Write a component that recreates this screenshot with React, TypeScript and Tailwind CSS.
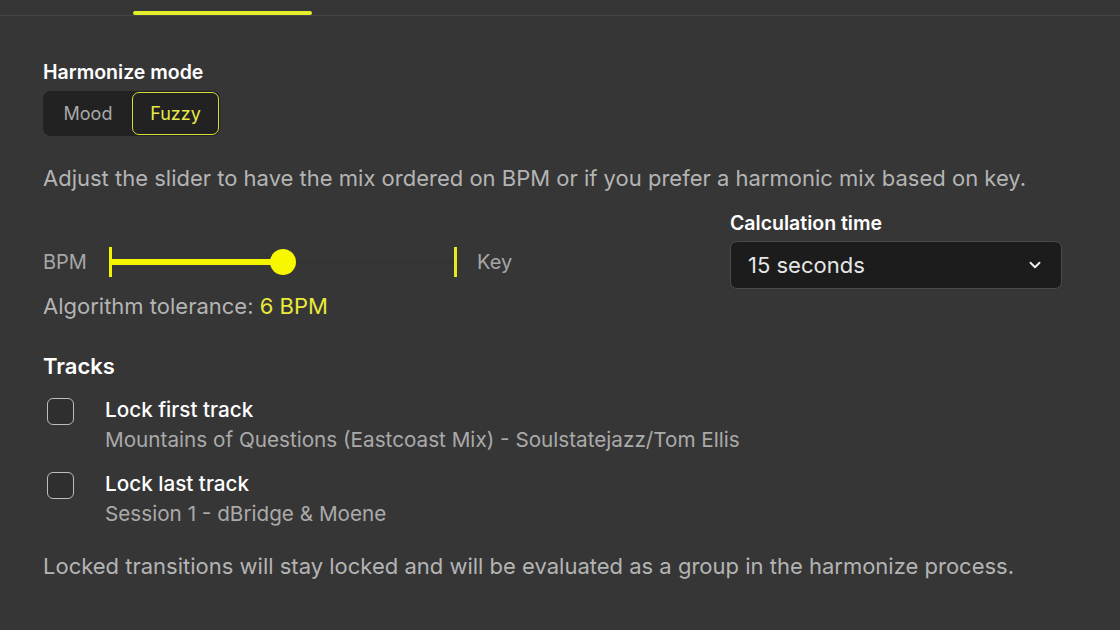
import React from "react";

export default function App() {
  return (
    <div
      className="w-[1120px] h-[630px] bg-[#363636] overflow-hidden text-[#b9b9b9]"
      style={{ fontFamily: "Inter, 'Noto Sans', sans-serif" }}
    >
      {/* tab bar remnant */}
      <div className="h-[16px] border-b border-[#474747] relative">
        <div className="absolute left-[133px] top-[11px] w-[179px] h-[4px] rounded-full bg-[#e4ef2c]" />
      </div>

      <div className="px-[43px] pt-[44px]">
        <div className="text-[19.5px] font-semibold text-white leading-[24px]">Harmonize mode</div>
        <div className="mt-[7px] inline-flex h-[45px] rounded-[8px] bg-[#222222] p-[1px]">
          <div className="w-[88px] flex items-center justify-center text-[18px] text-[#a9a9a9]">Mood</div>
          <div className="w-[87px] flex items-center justify-center text-[18px] text-[#e8e84a] border-[1.5px] border-[#d9dc3a] rounded-[7px]">
            Fuzzy
          </div>
        </div>

        <div className="mt-[27px] text-[22px] leading-[30px] text-[#b4b4b4]">
          Adjust the slider to have the mix ordered on BPM or if you prefer a harmonic mix based on key.
        </div>

        <div className="mt-[18px] flex">
          <div className="w-[687px]">
            <div className="flex items-center mt-[34px] h-[34px]">
              <span className="text-[20px] text-[#a6a6a6] w-[66px]">BPM</span>
              <div className="relative w-[348px] h-[34px]">
                <div className="absolute left-0 top-[2px] w-[3px] h-[30px] bg-[#f2f200]" />
                <div className="absolute left-[2px] top-[15px] w-[344px] h-[4px] bg-[#333333]" />
                <div className="absolute left-[2px] top-[14px] w-[172px] h-[6px] bg-[#f4f400]" />
                <div className="absolute left-[161px] top-[4px] w-[26px] h-[26px] rounded-full bg-[#f7f700]" />
                <div className="absolute left-[345px] top-[2px] w-[3px] h-[30px] bg-[#e2ec20]" />
              </div>
              <span className="ml-[20px] text-[20px] text-[#a6a6a6]">Key</span>
            </div>
            <div className="mt-[13px] text-[22px] text-[#b4b4b4] leading-[28px]">
              Algorithm tolerance: <span className="text-[#eaea3a]">6 BPM</span>
            </div>
          </div>
          <div className="w-[332px]">
            <div className="text-[19.5px] font-semibold text-white leading-[24px]">Calculation time</div>
            <div className="mt-[6px] h-[48px] rounded-[7px] bg-[#1c1c1c] border border-[#4a4a4a] flex items-center pl-[17px] pr-[17px]">
              <span className="text-[22px] text-[#e6e6e6] flex-1">15 seconds</span>
              <svg width="18" height="18" viewBox="0 0 24 24" fill="none" stroke="#eeeeee" strokeWidth="2.6" strokeLinecap="round" strokeLinejoin="round">
                <path d="M6 9l6 6 6-6" />
              </svg>
            </div>
          </div>
        </div>

        <div className="mt-[32px] text-[22px] font-semibold text-white leading-[28px]">Tracks</div>

        <div className="mt-[17px] flex">
          <div className="w-[27px] h-[27px] ml-[4px] mt-[1px] rounded-[6px] border-[1.5px] border-[#bdbdbd] bg-[#2f2f2f]" />
          <div className="ml-[31px]">
            <div className="text-[20.7px] font-medium text-white leading-[26px]">Lock first track</div>
            <div className="mt-[4px] text-[20.7px] text-[#aaaaaa] leading-[26px]">
              Mountains of Questions (Eastcoast Mix) - Soulstatejazz/Tom Ellis
            </div>
          </div>
        </div>
        <div className="mt-[18px] flex">
          <div className="w-[27px] h-[27px] ml-[4px] mt-[1px] rounded-[6px] border-[1.5px] border-[#bdbdbd] bg-[#2f2f2f]" />
          <div className="ml-[31px]">
            <div className="text-[20.7px] font-medium text-white leading-[26px]">Lock last track</div>
            <div className="mt-[4px] text-[20.7px] text-[#aaaaaa] leading-[26px]">Session 1 - dBridge &amp; Moene</div>
          </div>
        </div>

        <div className="mt-[24px] text-[22px] text-[#b4b4b4] leading-[30px]">
          Locked transitions will stay locked and will be evaluated as a group in the harmonize process.
        </div>
      </div>
    </div>
  );
}
